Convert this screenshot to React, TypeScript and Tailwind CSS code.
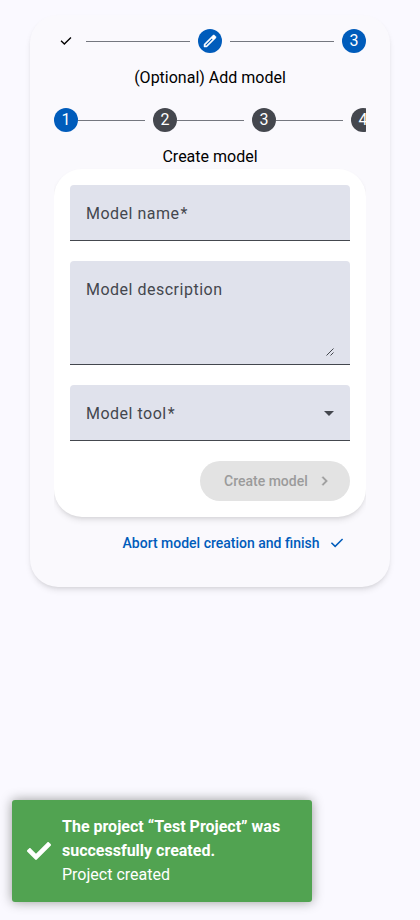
import React from "react";

const CHECK = "M382-240 154-468l57-57 171 171 367-367 57 57-424 424Z";
const EDIT =
  "M200-200h57l391-391-57-57-391 391v57Zm-80 80v-170l528-527q12-11 26.5-17t30.5-6q16 0 31 6t26 18l55 56q12 11 17.5 26t5.5 30q0 16-5.5 30.5T817-647L290-120H120Zm640-584-56-56 56 56Zm-141 85-28-29 57 57-29-28Z";
const CHEVRON = "M504-480 320-664l56-56 240 240-240 240-56-56 184-184Z";

function Icon({ d, className }: { d: string; className: string }) {
  return (
    <svg viewBox="0 -960 960 960" fill="currentColor" className={className}>
      <path d={d} />
    </svg>
  );
}

function Step({ label, active }: { label: string; active?: boolean }) {
  return (
    <div
      className={`flex size-6 shrink-0 items-center justify-center rounded-full text-white ${
        active ? "bg-[#005cbb]" : "bg-[#44474e]"
      }`}
    >
      {label}
    </div>
  );
}

function Line({ className }: { className: string }) {
  return <div className={`h-px shrink-0 bg-[#74777f] ${className}`} />;
}

export default function App() {
  return (
    <div className="flex h-[920px] w-[420px] flex-col justify-between bg-[#faf9ff] font-['Roboto',sans-serif] text-base text-black">
      <main className="mx-[30px] mt-[15px] h-[572px] rounded-[28px] bg-[#faf9fd] px-6 pt-[14px] shadow-md">
        <div className="flex items-center justify-between">
          <div className="flex size-6 items-center justify-center pb-px">
            <Icon d={CHECK} className="size-4" />
          </div>
          <Line className="w-[104px]" />
          <div className="flex size-6 items-center justify-center rounded-full bg-[#005cbb] text-white">
            <Icon d={EDIT} className="size-4 stroke-current stroke-[28]" />
          </div>
          <Line className="w-[104px]" />
          <Step label="3" active />
        </div>
        <p className="mt-[13px] text-center leading-6">(Optional) Add model</p>

        <div className="overflow-hidden pt-[18px]">
          <div className="flex items-center">
            <Step label="1" active />
            <Line className="mr-2 w-[67px]" />
            <Step label="2" />
            <Line className="mr-2 w-[67px]" />
            <Step label="3" />
            <Line className="mr-2 w-[67px]" />
            <Step label="4" />
          </div>
          <p className="mt-[13px] text-center leading-6">Create model</p>

          <form className="flex flex-col gap-5 rounded-[28px] bg-white p-4 tracking-[0.5px] text-[#44474e] shadow-md">
            <div className="h-14 rounded-t border-b border-[#44474e] bg-[#e0e2ec] px-4 pt-[17px] leading-6">
              Model name<span className="ml-px">*</span>
            </div>
            <div className="flex h-[104px] justify-between rounded-t border-b border-[#44474e] bg-[#e0e2ec] px-4 pt-[17px] leading-6">
              Model description
              <svg viewBox="0 0 8 8" className="mb-2 size-2 self-end" stroke="#44474e" fill="none">
                <path d="M0.5 7.5 7.5 0.5M4.5 7.5 7.5 4.5" />
              </svg>
            </div>
            <div className="flex h-14 items-start justify-between rounded-t border-b border-[#44474e] bg-[#e0e2ec] px-4 pt-[17px] leading-6">
              <span>
                Model tool<span className="ml-px">*</span>
              </span>
              <svg viewBox="0 0 10 5" className="mt-[9px] h-[5px] w-[10px]" fill="#44474e">
                <path d="M0 0h10L5 5z" />
              </svg>
            </div>
            <button
              type="button"
              className="flex h-10 w-[150px] items-center self-end rounded-full bg-[#e3e3e3] pl-6 text-sm font-medium tracking-normal text-[#9b9b9b]"
            >
              Create model
              <Icon d={CHEVRON} className="ml-2 size-[18px] stroke-current stroke-[20]" />
            </button>
          </form>

          <div className="mt-1.5 flex h-10 items-center justify-end pr-[20.5px] text-sm font-medium text-[#005cbb]">
            Abort model creation and finish
            <Icon d={CHECK} className="ml-2 size-[18px]" />
          </div>
        </div>
      </main>

      <aside className="mb-[18px] ml-3 flex w-[300px] items-center rounded-[3px] bg-[#51a351] py-[15px] pl-[15px] leading-6 text-white shadow-[0_0_12px_#999999]">
        <svg viewBox="0 0 512 512" fill="currentColor" className="mr-[11px] size-6 shrink-0">
          <path d="M173.898 439.404l-166.4-166.4c-9.997-9.997-9.997-26.206 0-36.204l36.203-36.204c9.997-9.998 26.207-9.998 36.204 0L192 312.69 432.095 72.596c9.997-9.997 26.207-9.997 36.204 0l36.203 36.204c9.997 9.997 9.997 26.206 0 36.204l-294.4 294.401c-9.998 9.997-26.207 9.997-36.204-.001z" />
        </svg>
        <div className="w-[235px]">
          <p className="font-bold">The project “Test Project” was successfully created.</p>
          <p>Project created</p>
        </div>
      </aside>
    </div>
  );
}
